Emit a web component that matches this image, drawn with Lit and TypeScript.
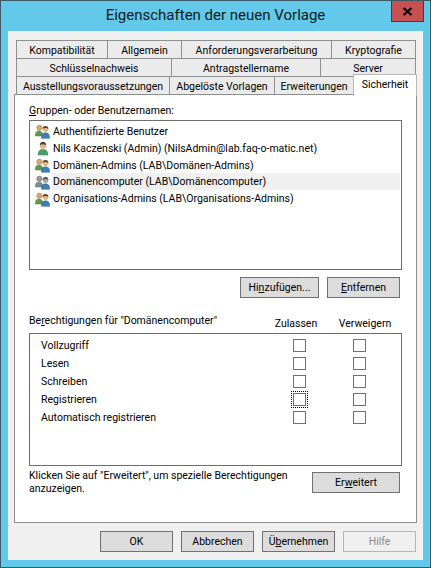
import { LitElement, html, css } from "lit";
import { customElement } from "lit/decorators.js";

const group = (grey: boolean) => html`<svg class="ico" viewBox="0 0 16 16" width="16" height="16">
  <path d="M0.500 11.500c0-2.400 1.300-3.500 3.500-3.500s3.500 1.100 3.500 3.500v1.500h-7z" fill="${grey ? "#7f8f86" : "#5f9a4e"}" stroke="${grey ? "#5e6a64" : "#4a7a3a"}" stroke-width=".5"/>
  <circle cx="4.300" cy="4.700" r="2.500" fill="${grey ? "#9c9c9c" : "#e3ab60"}" stroke="${grey ? "#666" : "#a58040"}" stroke-width=".7"/>
  <path d="M6.500 14c0-2.800 1.500-4.200 4-4.200s4 1.400 4 4.200v1.300h-8z" fill="#3f7fb8" stroke="#2d5f8e" stroke-width=".5"/>
  <circle cx="10.500" cy="6" r="2.900" fill="${grey ? "#a8a8a8" : "#eab878"}"/>
  <path d="M7.600 6c0-2.200 1.300-3 2.900-3s2.900.8 2.900 3C12 4.800 9 4.800 7.600 6z" fill="${grey ? "#4e5a5e" : "#54463a"}"/>
</svg>`;

const person = html`<svg class="ico" viewBox="0 0 16 16" width="16" height="16">
  <path d="M3 15c0-3.800 1.800-5.600 5-5.600s5 1.800 5 5.600z" fill="#4f9a6a" stroke="#3a7a50" stroke-width=".5"/>
  <circle cx="8" cy="5.500" r="3.200" fill="#e4b484"/>
  <path d="M4.800 5.200C4.800 3 6.200 1.800 8 1.800s3.200 1.200 3.200 3.400C9.600 4 6.400 4 4.800 5.200z" fill="#4a4238"/>
</svg>`;

@customElement("app-root")
export class AppRoot extends LitElement {
  static styles = css`
    :host { display: block; width: 431px; height: 568px; font-family: Roboto, "Liberation Sans", sans-serif; font-size: 10.5px; color: #000; }
    * { box-sizing: border-box; }
    .win { width: 431px; height: 568px; background: #63c9ea; border: 1px solid #3a5a68; display: flex; flex-direction: column; padding: 0 7px 7px; position: relative; }
    .titlebar { height: 30px; flex: none; display: flex; align-items: center; justify-content: center; font-size: 15px; color: #0c1c22; padding-bottom: 3px; }
    .close { position: absolute; top: 0; right: 6px; width: 33px; height: 21px; background: #c75050; border: 1px solid #4a3a3a; border-top: none; display: flex; align-items: center; justify-content: center; }
    .client { flex: 1; background: #f0f0f0; display: flex; flex-direction: column; padding: 9px 6px 0; }
    .tabs { display: flex; flex-direction: column; padding: 0 2px; flex: none; }
    .row { display: grid; height: 18px; }
    .r1 { grid-template-columns: 91px 74px 150px 84px; }
    .r2 { grid-template-columns: 155px 149px 95px; }
    .r3 { grid-template-columns: 153px 105px 79px 64px; width: 401px; }
    .tab { border: 1px solid #8e8f8f; border-bottom: none; margin-right: -1px; background: #ebebeb; text-align: center; line-height: 19px; white-space: nowrap; }
    .tab.on { background: #fff; height: 22px; margin-top: -2px; position: relative; z-index: 2; line-height: 19px; border-color: #b8b8b8; margin-right: 0; }
    .panel { height: 429px; flex: none; background: #fff; border: 1px solid #8e8f8f; padding: 7px 14px 0; display: flex; flex-direction: column; }
    .lbl { height: 18px; line-height: 18px; flex: none; }
    u { text-underline-offset: 1px; }
    .list { height: 150px; border: 1px solid #6e6e6e; padding: 2px 1px; flex: none; }
    .item { height: 16.8px; display: flex; align-items: center; gap: 1px; padding-left: 4px; white-space: nowrap; }
    .item span { flex: 1; line-height: 16px; padding: 1px 0 0 1px; }
    .item.sel span { background: #f0f0f0; }
    .ico { flex: none; }
    .btnrow { display: flex; justify-content: flex-end; gap: 8px; padding: 7px 2px 0 0; flex: none; }
    .btn { height: 21px; background: #dcdcdc; border: 1px solid #707070; display: flex; align-items: center; justify-content: center; white-space: nowrap; }
    .hin { width: 79px; }
    .ent { width: 73px; }
    .permhead { display: grid; grid-template-columns: 1fr 66px 72px; margin-top: 12px; height: 23px; white-space: nowrap; flex: none; padding-right: 1px; }
    .permhead .c { text-align: center; align-self: end; line-height: 18px; }
    .permhead .t { line-height: 22px; }
    .perms { height: 133px; border: 1px solid #6e6e6e; padding: 2px 0 0 11px; flex: none; }
    .perm { height: 18px; display: grid; grid-template-columns: 252px 60px 13px; align-items: center; }
    .perm .name { padding-top: 1px; }
    .cb { width: 13px; height: 13px; border: 1px solid #707070; background: #fff; }
    .focus { outline: 1px dotted #000; outline-offset: 1px; }
    .adv { display: flex; justify-content: space-between; padding: 3px 2px 0 0; flex: none; }
    .adv p { margin: 0; line-height: 13px; width: 270px; }
    .erw { width: 88px; margin-top: 3px; }
    .foot { display: flex; justify-content: flex-end; gap: 8px; padding: 8px 1px 0 0; flex: none; }
    .foot .btn { width: 73px; }
    .def { border-color: #3c7fb1; }
    .dis { background: #efefef; border-color: #b5b5b5; color: #8a8a8a; }
  `;

  render() {
    const perms = ["Vollzugriff", "Lesen", "Schreiben", "Registrieren", "Automatisch registrieren"];
    return html`<div class="win">
      <div class="titlebar">Eigenschaften der neuen Vorlage</div>
      <div class="close"><svg width="11" height="9" viewBox="0 0 11 9"><path d="M1.500 1l8 7M9.500 1l-8 7" stroke="#000" stroke-width="2.200" fill="none"/></svg></div>
      <div class="client">
        <div class="tabs">
          <div class="row r1"><div class="tab">Kompatibilität</div><div class="tab">Allgemein</div><div class="tab">Anforderungsverarbeitung</div><div class="tab">Kryptografie</div></div>
          <div class="row r2"><div class="tab">Schlüsselnachweis</div><div class="tab">Antragstellername</div><div class="tab">Server</div></div>
          <div class="row r3"><div class="tab">Ausstellungsvoraussetzungen</div><div class="tab">Abgelöste Vorlagen</div><div class="tab">Erweiterungen</div><div class="tab on">Sicherheit</div></div>
        </div>
        <div class="panel">
          <div class="lbl"><u>G</u>ruppen- oder Benutzernamen:</div>
          <div class="list">
            <div class="item">${group(false)}<span>Authentifizierte Benutzer</span></div>
            <div class="item">${person}<span>Nils Kaczenski (Admin) (NilsAdmin@lab.faq-o-matic.net)</span></div>
            <div class="item">${group(false)}<span>Domänen-Admins (LAB\\Domänen-Admins)</span></div>
            <div class="item sel">${group(true)}<span>Domänencomputer (LAB\\Domänencomputer)</span></div>
            <div class="item">${group(false)}<span>Organisations-Admins (LAB\\Organisations-Admins)</span></div>
          </div>
          <div class="btnrow"><div class="btn hin">Hi<u>n</u>zufügen...</div><div class="btn ent"><u>E</u>ntfernen</div></div>
          <div class="permhead"><div class="t">Be<u>r</u>echtigungen für "Domänencomputer"</div><div class="c">Zulassen</div><div class="c">Verweigern</div></div>
          <div class="perms">
            ${perms.map((p, i) => html`<div class="perm"><div class="name">${p}</div><div class="cb ${i === 3 ? "focus" : ""}"></div><div class="cb"></div></div>`)}
          </div>
          <div class="adv"><p>Klicken Sie auf "Erweitert", um spezielle Berechtigungen anzuzeigen.</p><div class="btn erw">Er<u>w</u>eitert</div></div>
        </div>
        <div class="foot">
          <div class="btn">OK</div><div class="btn def">Abbrechen</div><div class="btn">Ü<u>b</u>ernehmen</div><div class="btn dis">Hilfe</div>
        </div>
      </div>
    </div>`;
  }
}
